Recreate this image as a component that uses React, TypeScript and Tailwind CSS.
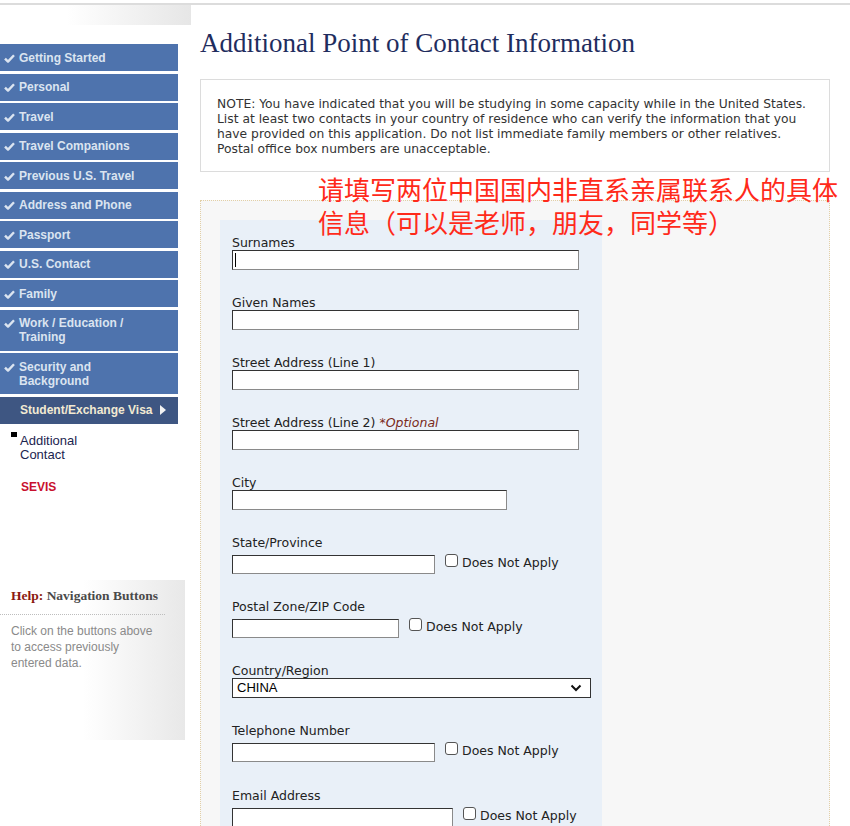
const navItems: Array<{ label: string[] }> = [
  { label: ["Getting Started"] },
  { label: ["Personal"] },
  { label: ["Travel"] },
  { label: ["Travel Companions"] },
  { label: ["Previous U.S. Travel"] },
  { label: ["Address and Phone"] },
  { label: ["Passport"] },
  { label: ["U.S. Contact"] },
  { label: ["Family"] },
  { label: ["Work / Education /", "Training"] },
  { label: ["Security and", "Background"] },
];

const labelFont = "font-['DejaVu_Sans',Verdana,sans-serif] text-[12.5px] leading-[14px] text-[#222]";
const inputBox = "block h-[20px] border border-[#8a8a8a] border-t-[#333] border-l-[#333] bg-white";

function Check() {
  return (
    <svg width="11" height="9" viewBox="0 0 11 9" className="shrink-0" aria-hidden="true">
      <path d="M1 4.6 L4 7.6 L10 1.2" fill="none" stroke="#dbe4f0" strokeWidth="2.4" strokeLinejoin="round" />
    </svg>
  );
}

function SideNav() {
  return (
    <div className="w-[191px] shrink-0">
      <div className="h-[20px] bg-[linear-gradient(to_right,#ffffff_35%,#e6e6e6)]" />
      <ul className="mt-[19px] w-[178px] font-['Liberation_Sans',Arial,sans-serif] text-[12px] font-bold">
        {navItems.map((item) => (
          <li key={item.label.join(" ")} className="mb-[2.5px] flex items-start gap-[4px] bg-[#4e73ad] py-[6.5px] pl-[4px] leading-[14px] text-[#dbe4f0]">
            <span className="mt-[3px]">
              <Check />
            </span>
            <span>
              {item.label.map((line) => (
                <span key={line} className="block">
                  {line}
                </span>
              ))}
            </span>
          </li>
        ))}
        <li className="flex items-center bg-[#3e5682] py-[6.5px] pl-[20px] leading-[14px] text-[#f2ead2]">
          Student/Exchange Visa
          <svg width="6" height="10" viewBox="0 0 6 10" className="ml-[7px]" aria-hidden="true">
            <path d="M0 0 L6 5 L0 10 Z" fill="#f2f2f2" />
          </svg>
        </li>
      </ul>
      <div className="mt-[8px] font-['Liberation_Sans',Arial,sans-serif] text-[13px] leading-[14px]">
        <div className="flex items-start">
          <span className="ml-[11px] h-[5px] w-[6px] bg-black" />
          <span className="ml-[3px] mt-[2px] text-[#1c2550]">
            Additional
            <br />
            Contact
          </span>
        </div>
        <div className="ml-[21px] mt-[18px] text-[12px] font-bold text-[#c8102e]">SEVIS</div>
      </div>
      <div className="mt-[86px] h-[160px] w-[185px] bg-[linear-gradient(to_right,#ffffff_45%,#e8e8e8)]">
        <div className="px-[11px] pb-[8px] pt-[6px] font-['Liberation_Serif','Times_New_Roman',serif] text-[13.5px] font-bold">
          <span className="text-[#8b1a10]">Help:</span> <span className="text-[#4a4a4a]">Navigation Buttons</span>
        </div>
        <div className="w-[165px] border-t border-dotted border-[#bdbdbd]" />
        <p className="w-[172px] px-[11px] pt-[8px] font-['Liberation_Sans',Arial,sans-serif] text-[12px] leading-[16px] text-[#8a8a8a]">
          Click on the buttons above to access previously entered data.
        </p>
      </div>
    </div>
  );
}

function TextField({ label, width, optional, yellow }: { label: string; width: number; optional?: boolean; yellow?: boolean }) {
  return (
    <div className="mb-[26px]">
      <div className={labelFont}>
        {label}
        {optional ? <span className="italic text-[#7a2a1a]"> *Optional</span> : null}
      </div>
      <div className={`${inputBox} ${yellow ? "bg-[#ffffc8]" : ""}`} style={{ width }}>
        {yellow ? <span className="ml-[2px] mt-[2px] block h-[14px] w-[1px] bg-black" /> : null}
      </div>
    </div>
  );
}

function CheckField({ label, width }: { label: string; width: number }) {
  return (
    <div className="mb-[26px]">
      <div className={labelFont}>{label}</div>
      <div className="mt-[5px] flex items-start">
        <div className={inputBox} style={{ width, height: 19 }} />
        <span className="ml-[10px] mt-[-1px] h-[13px] w-[13px] rounded-[3px] border border-[#555] bg-white" />
        <span className="ml-[4px] mt-[1px] font-['DejaVu_Sans',Verdana,sans-serif] text-[12.5px] leading-[14px] text-[#222]">Does Not Apply</span>
      </div>
    </div>
  );
}

function ContactForm() {
  return (
    <div className="mt-[28px] border border-dotted border-[#e2cfa6] bg-[#f7f7f7] pl-[19px] pt-[19px]">
      <div className="w-[382px] bg-[#e9f0f8] pl-[12px] pt-[16px] pb-[10px]">
        <TextField label="Surnames" width={347} yellow />
        <TextField label="Given Names" width={347} />
        <TextField label="Street Address (Line 1)" width={347} />
        <TextField label="Street Address (Line 2)" width={347} optional />
        <TextField label="City" width={275} />
        <CheckField label="State/Province" width={203} />
        <CheckField label="Postal Zone/ZIP Code" width={167} />
        <div className="mb-[26px]">
          <div className={labelFont}>Country/Region</div>
          <div className="relative flex h-[20px] w-[359px] items-center border border-[#333] bg-white pl-[4px] font-['Liberation_Sans',Arial,sans-serif] text-[13px] text-black">
            CHINA
            <svg width="12" height="8" viewBox="0 0 12 8" className="absolute right-[8px] top-[5px]" aria-hidden="true">
              <path d="M1.5 1.5 L6 6 L10.5 1.5" fill="none" stroke="#111" strokeWidth="2" />
            </svg>
          </div>
        </div>
        <CheckField label="Telephone Number" width={203} />
        <div className="h-[1px]" />
        <CheckField label="Email Address" width={221} />
      </div>
    </div>
  );
}

export default function App() {
  return (
    <div className="relative min-h-[826px] bg-white">
      <div className="h-[3px]" />
      <div className="h-[2px] bg-[#dcdcdc]" />
      <div className="flex">
        <SideNav />
        <main className="ml-[9px] w-[630px]">
          <h1 className="mt-[23px] font-['Liberation_Serif','Times_New_Roman',serif] text-[27px] font-normal leading-[30px] text-[#1f2d5e]">
            Additional Point of Contact Information
          </h1>
          <div className="mt-[21px] h-[93px] border border-[#dcdcdc] pl-[16px] pr-[12px] pt-[17px]">
            <p className="font-['DejaVu_Sans',Verdana,sans-serif] text-[12.3px] leading-[15px] text-[#333]">
              NOTE: You have indicated that you will be studying in some capacity while in the United States. List at least two contacts in your country of residence who can verify the information that you have provided on this application. Do not list immediate family members or other relatives. Postal office box numbers are unacceptable.
            </p>
          </div>
          <ContactForm />
        </main>
      </div>
      <div className="absolute left-[318px] top-[172px] font-['Noto_Sans_CJK_SC',sans-serif] text-[26px] leading-[33px] text-[#ff2a1a]">
        请填写两位中国国内非直系亲属联系人的具体
        <br />
        信息（可以是老师，朋友，同学等）
      </div>
    </div>
  );
}
